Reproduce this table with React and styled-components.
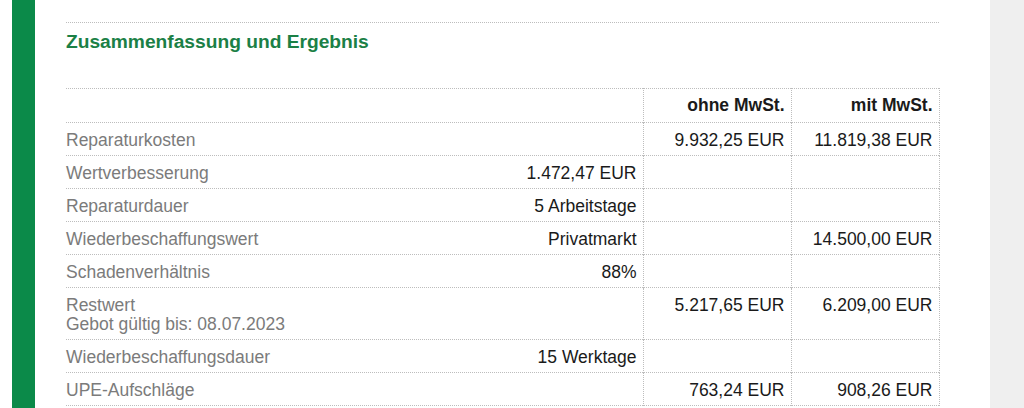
import styled, { createGlobalStyle } from "styled-components";

const GlobalStyle = createGlobalStyle`
    html, body {
        margin: 0;
        padding: 0;
        background: #ffffff;
        font-family: "Liberation Sans", Arial, sans-serif;
    }
`;

const Page = styled.div`
    display: flex;
    height: 408px;
    overflow: hidden;
    padding-left: 12px;
`;

const GreenBar = styled.div`
    width: 23px;
    flex-shrink: 0;
    background-color: #0b8a49;
`;

const Content = styled.div`
    width: 873px;
    margin-left: 31px;
    padding-top: 22px;
    flex-shrink: 0;
`;

const Spacer = styled.div`
    flex-grow: 1;
`;

const SidePanel = styled.div`
    width: 34px;
    flex-shrink: 0;
    background-color: #efefef;
`;

const Section = styled.section`
    border-top: 1px dotted #bdbdbd;
    padding-top: 8px;
`;

const Title = styled.h2`
    margin: 0 0 35px;
    font-size: 19.2px;
    line-height: 22px;
    font-weight: bold;
    color: #1b8046;
`;

const Table = styled.table`
    width: 873px;
    border-collapse: collapse;
    table-layout: fixed;
    font-size: 17.5px;
    line-height: 19px;
`;

const Row = styled.tr`
    border-top: 1px dotted #bdbdbd;
    border-bottom: 1px dotted #bdbdbd;
`;

const LabelCell = styled.td`
    width: 577px;
    padding: 8px 6px 5px 0;
    vertical-align: top;
    box-sizing: border-box;
`;

const ValueCell = styled.td`
    width: 148px;
    padding: ${({ $head }) => ($head ? "7px 6px 7px" : "8px 6px 5px")};
    text-align: right;
    vertical-align: top;
    color: #1a1a1a;
    font-weight: ${({ $head }) => ($head ? "bold" : "normal")};
    border-left: 1px dotted #bdbdbd;
    border-right: 1px dotted #bdbdbd;
    box-sizing: border-box;
    white-space: nowrap;
`;

const LabelLine = styled.div`
    display: flex;
    justify-content: space-between;
`;

const Label = styled.span`
    color: #7b7b7b;
`;

const SubLabel = styled.div`
    color: #7b7b7b;
`;

const Value = styled.span`
    color: #1a1a1a;
`;

const rows = [
    { label: "Reparaturkosten", net: "9.932,25 EUR", gross: "11.819,38 EUR" },
    { label: "Wertverbesserung", value: "1.472,47 EUR" },
    { label: "Reparaturdauer", value: "5 Arbeitstage" },
    { label: "Wiederbeschaffungswert", value: "Privatmarkt", gross: "14.500,00 EUR" },
    { label: "Schadenverhältnis", value: "88%" },
    {
        label: "Restwert",
        sub: "Gebot gültig bis: 08.07.2023",
        net: "5.217,65 EUR",
        gross: "6.209,00 EUR",
    },
    { label: "Wiederbeschaffungsdauer", value: "15 Werktage" },
    { label: "UPE-Aufschläge", net: "763,24 EUR", gross: "908,26 EUR" },
];

const App = () => {
    return (
        <>
            <GlobalStyle />
            <Page>
                <GreenBar />
                <Content>
                    <Section>
                        <Title>Zusammenfassung und Ergebnis</Title>
                        <Table>
                            <tbody>
                                <Row>
                                    <LabelCell />
                                    <ValueCell $head>ohne MwSt.</ValueCell>
                                    <ValueCell $head>mit MwSt.</ValueCell>
                                </Row>
                                {rows.map((row) => (
                                    <Row key={row.label}>
                                        <LabelCell>
                                            <LabelLine>
                                                <Label>{row.label}</Label>
                                                {row.value && <Value>{row.value}</Value>}
                                            </LabelLine>
                                            {row.sub && <SubLabel>{row.sub}</SubLabel>}
                                        </LabelCell>
                                        <ValueCell>{row.net}</ValueCell>
                                        <ValueCell>{row.gross}</ValueCell>
                                    </Row>
                                ))}
                            </tbody>
                        </Table>
                    </Section>
                </Content>
                <Spacer />
                <SidePanel />
            </Page>
        </>
    );
};

export default App;
